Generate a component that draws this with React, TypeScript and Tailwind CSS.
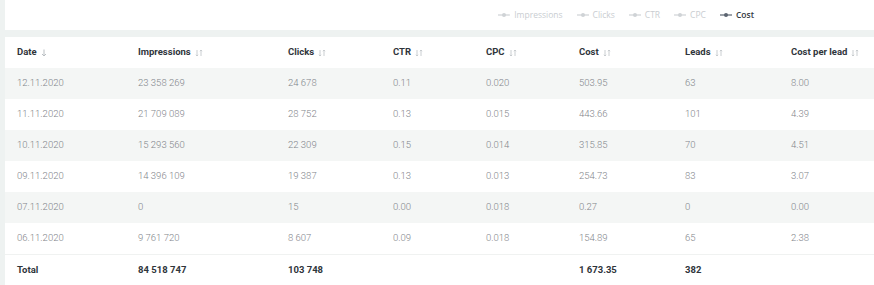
import React from 'react';

type Row = {
  date: string;
  impressions: string;
  clicks: string;
  ctr: string;
  cpc: string;
  cost: string;
  leads: string;
  cpl: string;
};

const rows: Row[] = [
  { date: '12.11.2020', impressions: '23 358 269', clicks: '24 678', ctr: '0.11', cpc: '0.020', cost: '503.95', leads: '63', cpl: '8.00' },
  { date: '11.11.2020', impressions: '21 709 089', clicks: '28 752', ctr: '0.13', cpc: '0.015', cost: '443.66', leads: '101', cpl: '4.39' },
  { date: '10.11.2020', impressions: '15 293 560', clicks: '22 309', ctr: '0.15', cpc: '0.014', cost: '315.85', leads: '70', cpl: '4.51' },
  { date: '09.11.2020', impressions: '14 396 109', clicks: '19 387', ctr: '0.13', cpc: '0.013', cost: '254.73', leads: '83', cpl: '3.07' },
  { date: '07.11.2020', impressions: '0', clicks: '15', ctr: '0.00', cpc: '0.018', cost: '0.27', leads: '0', cpl: '0.00' },
  { date: '06.11.2020', impressions: '9 761 720', clicks: '8 607', ctr: '0.09', cpc: '0.018', cost: '154.89', leads: '65', cpl: '2.38' },
];

const legend = [
  { label: 'Impressions', active: false },
  { label: 'Clicks', active: false },
  { label: 'CTR', active: false },
  { label: 'CPC', active: false },
  { label: 'Cost', active: true },
];

const cols = 'grid grid-cols-[121px_150px_105px_93px_93px_106px_106px_1fr] items-center px-3';

function LegendIcon({ active }: { active: boolean }) {
  const c = active ? '#5b6470' : '#cfd3d6';
  return (
    <svg width="12" height="6" viewBox="0 0 12 6" className="mr-1">
      <line x1="0" y1="3" x2="12" y2="3" stroke={c} strokeWidth="1.2" />
      <circle cx="6" cy="3" r="2" fill={c} />
    </svg>
  );
}

function SortIcon({ down }: { down?: boolean }) {
  if (down) {
    return (
      <svg width="6" height="8" viewBox="0 0 6 8" className="ml-1">
        <path d="M3 0.5V7M1 5L3 7L5 5" stroke="#b9bec2" strokeWidth="1" fill="none" />
      </svg>
    );
  }
  return (
    <svg width="8" height="8" viewBox="0 0 8 8" className="ml-1">
      <path d="M2 1V7M0.8 5.8L2 7L3.2 5.8M6 7V1M4.8 2.2L6 1L7.2 2.2" stroke="#c4c8cc" strokeWidth="0.9" fill="none" />
    </svg>
  );
}

export default function App() {
  const headers = ['Impressions', 'Clicks', 'CTR', 'CPC', 'Cost', 'Leads', 'Cost per lead'];

  return (
    <div className="w-[874px] h-[285px] overflow-hidden bg-[#eef2f1] pl-[5px] font-['Roboto',sans-serif]">
      <div className="h-[30px] bg-white flex items-center justify-end pr-[120px] font-['Open_Sans',sans-serif] text-[8.5px]">
        {legend.map((l) => (
          <div key={l.label} className="flex items-center ml-[14px]">
            <LegendIcon active={l.active} />
            <span className={l.active ? 'text-[#333a42] font-semibold' : 'text-[#c9cdd1]'}>{l.label}</span>
          </div>
        ))}
      </div>

      <div className="mt-[7px] bg-white">
        <div className={`${cols} h-[31px] text-[9.5px] font-bold text-[#2f353b]`}>
          <div className="flex items-center">Date<SortIcon down /></div>
          {headers.map((h) => (
            <div key={h} className="flex items-center">{h}<SortIcon /></div>
          ))}
        </div>

        {rows.map((r, i) => (
          <div
            key={r.date}
            className={`${cols} h-[31px] text-[9.5px] font-light text-[#7f848a] ${i % 2 === 0 ? 'bg-[#f4f6f5]' : 'bg-white'}`}
          >
            <div>{r.date}</div>
            <div>{r.impressions}</div>
            <div>{r.clicks}</div>
            <div>{r.ctr}</div>
            <div>{r.cpc}</div>
            <div>{r.cost}</div>
            <div>{r.leads}</div>
            <div>{r.cpl}</div>
          </div>
        ))}

        <div className={`${cols} h-[31px] text-[9.5px] font-bold text-[#2f353b] border-t border-[#f0f2f1]`}>
          <div>Total</div>
          <div>84 518 747</div>
          <div>103 748</div>
          <div></div>
          <div></div>
          <div>1 673.35</div>
          <div>382</div>
          <div></div>
        </div>
      </div>
    </div>
  );
}
